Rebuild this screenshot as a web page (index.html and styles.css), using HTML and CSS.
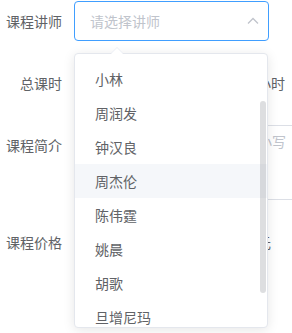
FILE: index.html
```html
<!DOCTYPE html>
<html lang="zh-CN">

<head>
    <meta charset="UTF-8">
    <meta name="viewport" content="width=device-width, initial-scale=1.0">
    <title>课程</title>
    <link rel="stylesheet" href="styles.css">
</head>

<body>
    <div class="form">
        <div class="row">
            <label class="label">课程讲师</label>
            <div class="content">
                <div class="select is-focus">
                    <input class="input" type="text" placeholder="请选择讲师" readonly>
                    <svg class="arrow" width="12" height="8" viewBox="0 0 12 8">
                        <path d="M1 6.5 L6 1.5 L11 6.5" fill="none" stroke="#c0c4cc" stroke-width="1.3" />
                    </svg>
                </div>

                <div class="dropdown">
                    <span class="popper-arrow"></span>
                    <ul class="options">
                        <li class="option">小林</li>
                        <li class="option">周润发</li>
                        <li class="option">钟汉良</li>
                        <li class="option hover">周杰伦</li>
                        <li class="option">陈伟霆</li>
                        <li class="option">姚晨</li>
                        <li class="option">胡歌</li>
                        <li class="option">旦增尼玛</li>
                    </ul>
                    <div class="thumb"></div>
                </div>
            </div>
        </div>

        <div class="row">
            <label class="label">总课时</label>
            <div class="content">
                <input class="input short" type="number" value="0">
                <span class="unit">小时</span>
            </div>
        </div>

        <div class="row">
            <label class="label">课程简介</label>
            <div class="content clip">
                <textarea class="textarea" placeholder="请输入课程简介，不区分大小写"></textarea>
            </div>
        </div>

        <div class="row">
            <label class="label">课程价格</label>
            <div class="content">
                <input class="input short" type="number" value="0">
                <span class="unit">元</span>
            </div>
        </div>
    </div>
</body>

</html>
```

FILE: styles.css
```css
body {
    margin: 0;
    background: #fff;
    color: #606266;
    font-family: "Noto Sans CJK SC", "Liberation Sans", sans-serif;
    font-size: 14px;
    overflow: hidden;
    height: 333px;
}

.form {
    padding-top: 1px;
}

.row {
    display: flex;
    margin-bottom: 22px;
}

.label {
    width: 74px;
    flex-shrink: 0;
    box-sizing: border-box;
    padding-right: 12px;
    text-align: right;
    line-height: 40px;
    color: #606266;
}

.content {
    position: relative;
    display: flex;
    align-items: center;
    gap: 8px;
    flex: 1;
    min-width: 0;
}

.content.clip {
    overflow: hidden;
}

.input {
    box-sizing: border-box;
    height: 40px;
    width: 195px;
    padding: 0 15px;
    border: 1px solid #dcdfe6;
    border-radius: 4px;
    font: inherit;
    color: #606266;
    outline: none;
    background: #fff;
}

.input::placeholder,
.textarea::placeholder {
    color: #c0c4cc;
}

.input.short {
    width: 175px;
    flex-shrink: 0;
}

.unit {
    white-space: nowrap;
    line-height: 40px;
}

.select {
    position: relative;
    display: flex;
}

.select.is-focus .input {
    border-color: #409eff;
}

.arrow {
    position: absolute;
    right: 10px;
    top: 16px;
}

.textarea {
    flex-shrink: 0;
    box-sizing: border-box;
    width: 300px;
    height: 75px;
    padding: 5px 15px;
    border: 1px solid #dcdfe6;
    border-radius: 4px;
    font: inherit;
    line-height: 1.5;
    resize: none;
    outline: none;
}

.dropdown {
    position: absolute;
    z-index: 10;
    top: 52px;
    left: 0;
    box-sizing: border-box;
    width: 194px;
    height: 275px;
    border: 1px solid #e4e7ed;
    border-radius: 4px;
    background: #fff;
    box-shadow: 0 2px 12px 0 rgba(0, 0, 0, 0.1);
}

.popper-arrow {
    position: absolute;
    top: -7px;
    left: 36px;
    width: 0;
    height: 0;
    border: 6px solid transparent;
    border-top-width: 0;
    border-bottom-color: #ebeef5;
}

.popper-arrow:after {
    content: '';
    position: absolute;
    top: 1px;
    left: -6px;
    border: 6px solid transparent;
    border-top-width: 0;
    border-bottom-color: #fff;
}

.options {
    list-style: none;
    margin: 0;
    padding: 8px 0 0;
    height: 100%;
    box-sizing: border-box;
    overflow: hidden;
    border-radius: 4px;
}

.option {
    height: 34px;
    line-height: 34px;
    padding: 0 20px;
    color: #606266;
    white-space: nowrap;
}

.option.hover {
    background: #f5f7fa;
}

.thumb {
    position: absolute;
    right: 1px;
    top: 47px;
    width: 6px;
    height: 192px;
    border-radius: 3px;
    background: rgba(144, 147, 153, 0.3);
}
```
